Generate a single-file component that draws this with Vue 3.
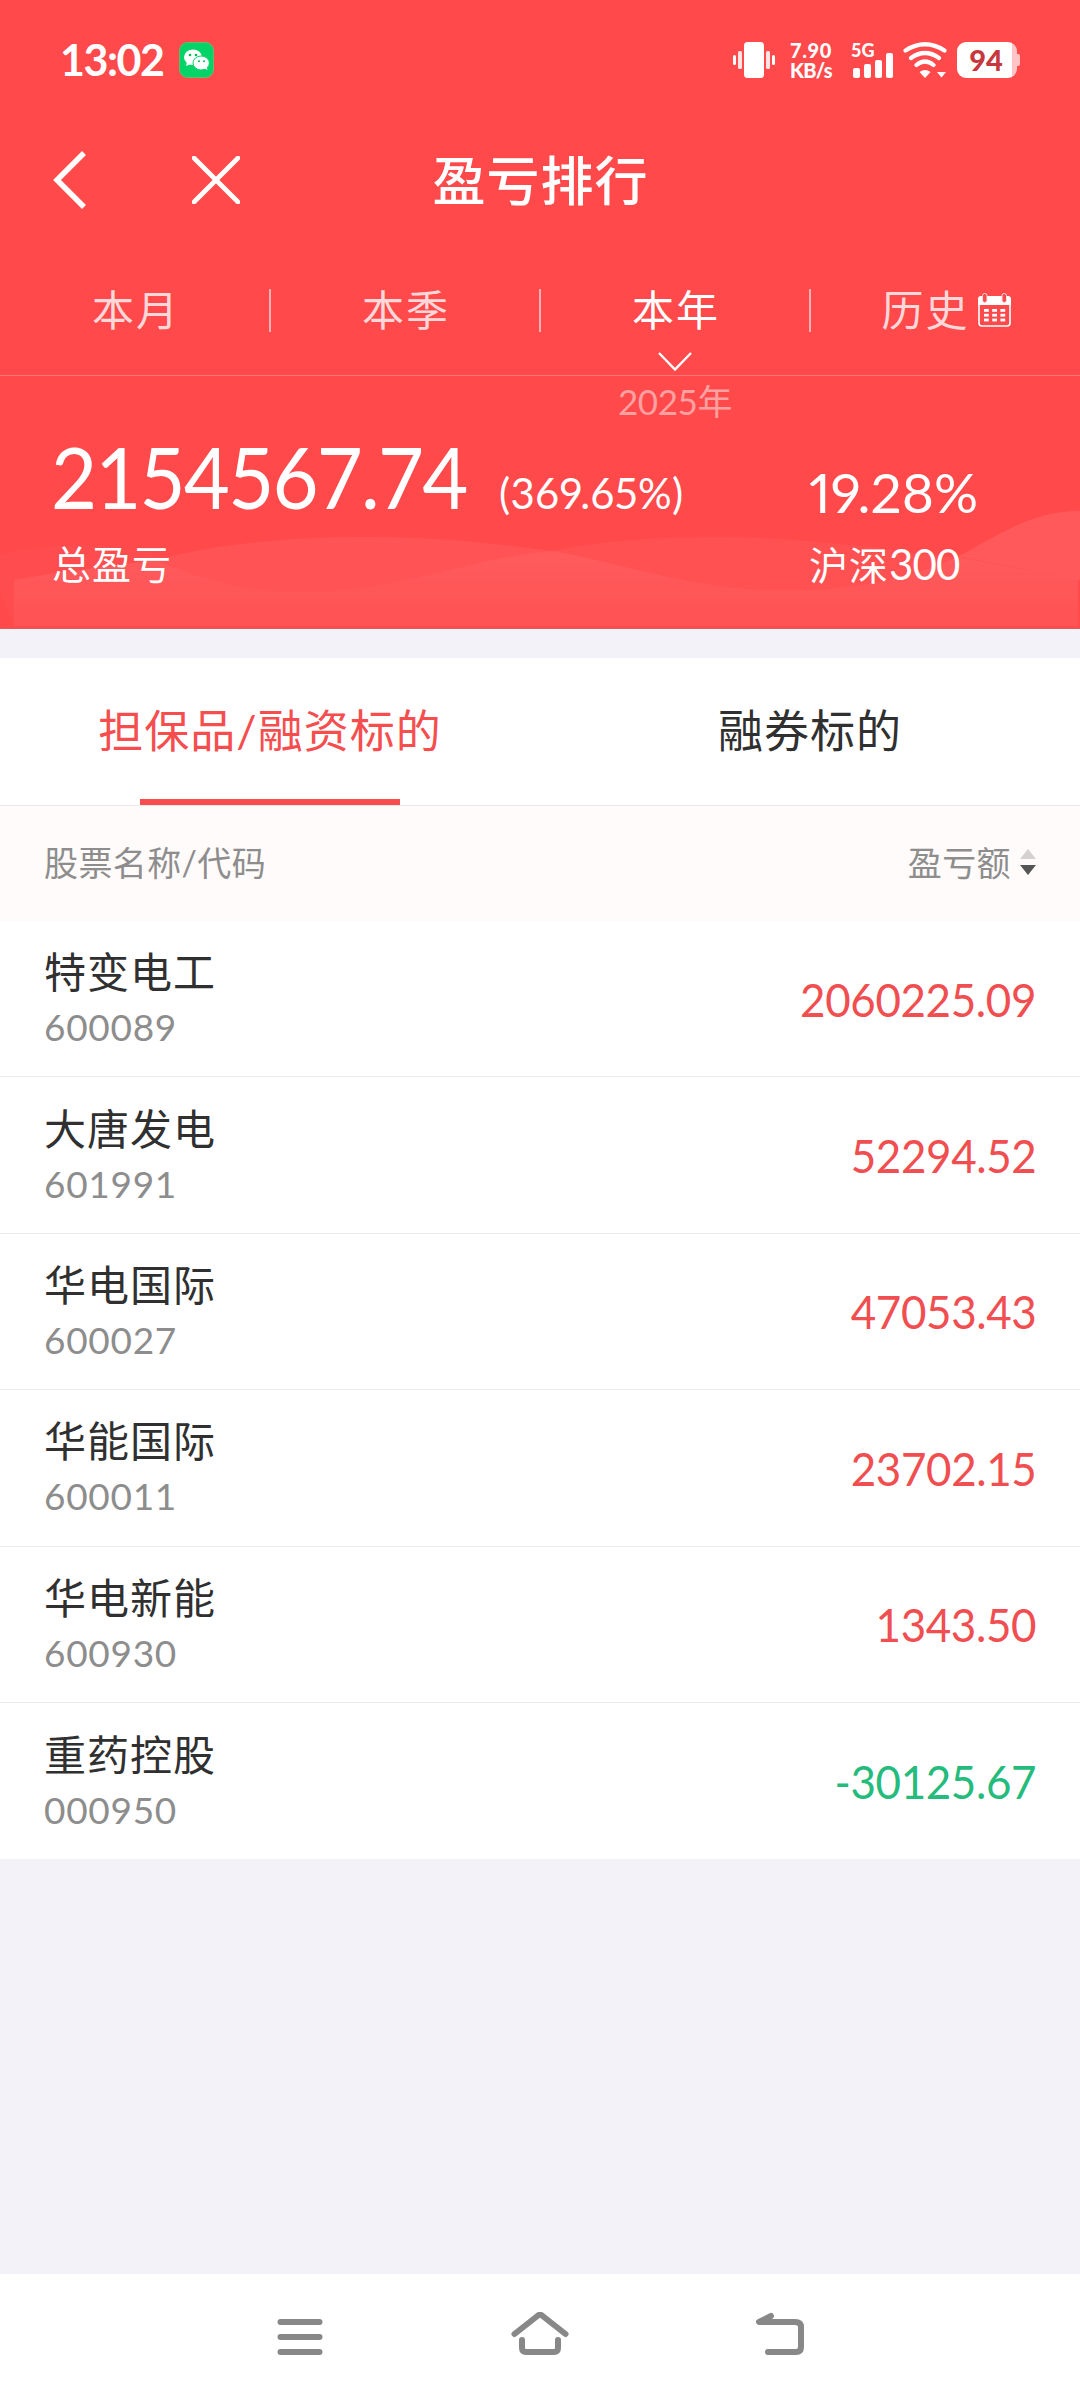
<script setup>
const periods = ['本月', '本季', '本年', '历史']
const stocks = [
  { name: '特变电工', code: '600089', amount: '2060225.09' },
  { name: '大唐发电', code: '601991', amount: '52294.52' },
  { name: '华电国际', code: '600027', amount: '47053.43' },
  { name: '华能国际', code: '600011', amount: '23702.15' },
  { name: '华电新能', code: '600930', amount: '1343.50' },
  { name: '重药控股', code: '000950', amount: '-30125.67' },
]
const calendarDots = [0, 1, 2].flatMap((r) => [0, 1, 2].map((c) => ({ x: 6 + c * 8.2, y: 16 + r * 4.8 })))
</script>

<template>
  <div class="screen">
    <header class="hero">
      <svg class="waves" viewBox="0 0 1080 629" width="1080" height="629" aria-hidden="true">
        <defs>
          <linearGradient id="fade" x1="0" y1="0" x2="0" y2="1">
            <stop offset="0" stop-color="#fff" stop-opacity=".1" />
            <stop offset="1" stop-color="#fff" stop-opacity=".05" />
          </linearGradient>
        </defs>
        <path d="M0 555C50 541 110 542 165 556C110 566 50 574 14 580V625L0 590Z" fill="#fff" fill-opacity=".02" />
        <path d="M155 560C230 541 300 537 370 537C440 537 500 544 552 551C460 560 400 592 300 592C240 592 190 575 155 560Z" fill="#fff" fill-opacity=".06" />
        <path d="M552 551C600 541 650 537 722 537C800 537 880 548 958 558C920 575 860 592 780 590C690 590 620 562 552 551Z" fill="#fff" fill-opacity=".04" />
        <path d="M14 580C60 572 110 566 155 560C190 575 240 592 300 592C400 592 460 560 552 551C620 562 690 590 780 590C860 592 920 575 958 557L1078 580V626H14Z" fill="url(#fade)" />
        <path d="M958 556.500C1000 535 1030 511 1080 511V580.400Z" fill="#fff" fill-opacity=".09" />
      </svg>

      <div class="status">
        <span class="time">13:02</span>
        <svg class="wechat" viewBox="0 0 35 36" width="35" height="36">
          <rect x=".5" y=".5" width="34" height="35" rx="8" fill="#04d368" stroke="#6bb96b" />
          <ellipse cx="14" cy="15.2" rx="9" ry="7.7" fill="#fff" />
          <path d="M8 20l-1 4 5-2z" fill="#fff" />
          <ellipse cx="22.2" cy="21" rx="8.2" ry="7" fill="#fff" stroke="#04d368" />
          <path d="M25 26l3.500 2-1-4z" fill="#fff" />
          <g fill="#04b95a"><circle cx="11" cy="13" r="1.300" /><circle cx="17" cy="13" r="1.300" /><circle cx="20" cy="19.300" r="1" /><circle cx="25" cy="19.300" r="1" /></g>
        </svg>
        <div class="indicators">
          <svg class="vibrate" viewBox="0 0 42 36" width="42" height="36" fill="#fff">
            <rect x="11" width="20" height="36" rx="3.500" />
            <rect x="5" y="9" width="4" height="18" rx="1.500" opacity=".85" /><rect x="33" y="9" width="4" height="18" rx="1.500" opacity=".85" />
            <rect y="13" width="3" height="10" rx="1.500" /><rect x="39" y="13" width="3" height="10" rx="1.500" />
          </svg>
          <div class="speed"><span class="rate">7.90</span><span class="unit">KB/s</span></div>
          <div class="signal">
            <span>5G</span>
            <svg viewBox="0 0 42 36" width="42" height="36" fill="#fff">
              <rect x="2" y="26" width="7" height="10" rx="2" /><rect x="13" y="22" width="7" height="14" rx="2" />
              <rect x="24" y="18" width="7" height="18" rx="2" /><rect x="35" y="11" width="7" height="25" rx="2" />
            </svg>
          </div>
          <svg class="wifi" viewBox="0 0 45 36" width="45" height="36" fill="none" stroke="#fff" stroke-width="4.200" stroke-linecap="round">
            <path d="M2.500 8.500Q22 -4 41.500 8.500M8 16Q22 6 36 16M13.500 23Q22 16 30.500 23" />
            <path d="M16.500 30Q22 26 27.500 30L22 36Z" fill="#fff" stroke="none" />
            <path d="M34 30H43L38.500 35.500Z" fill="#fff" stroke="none" />
          </svg>
          <div class="battery"><span>94</span></div>
        </div>
      </div>

      <nav class="titlebar">
        <svg class="back" viewBox="0 0 34 58" width="34" height="58" fill="none" stroke="#fff" stroke-width="5.500"><path d="M31 2L4 29L31 56" /></svg>
        <svg class="close" viewBox="0 0 48 48" width="48" height="48" fill="none" stroke="#fff" stroke-width="4.600" stroke-linecap="round"><path d="M2 2L46 46M46 2L2 46" /></svg>
        <h1>盈亏排行</h1>
      </nav>

      <div class="periods">
        <div v-for="(p, i) in periods" :key="p" class="period" :class="{ active: i === 2 }">
          <span>{{ p }}</span>
          <svg v-if="i === 3" class="calendar" viewBox="0 0 33 34" width="33" height="34">
            <rect x="1" y="4" width="31" height="29" rx="3" fill="none" stroke="#fff" stroke-width="1.600" />
            <path d="M0 12V6Q0 3 3 3H30Q33 3 33 6V12Z" fill="#fff" />
            <g fill="#fa4a4b" stroke="#fdd" stroke-width="1"><rect x="4.500" y=".5" width="4.500" height="9" rx="2.200" /><rect x="24" y=".5" width="4.500" height="9" rx="2.200" /></g>
            <rect v-for="d in calendarDots" :key="d.x + '-' + d.y" :x="d.x" :y="d.y" width="4.800" height="2.800" fill="#fff" />
          </svg>
          <svg v-if="i === 2" class="caret" viewBox="0 0 34 20" width="34" height="20" fill="none" stroke="#fff" stroke-width="2.400"><path d="M1 1L17 17.500L33 1" /></svg>
        </div>
      </div>

      <div class="year"><span>2025年</span></div>

      <div class="summary">
        <div class="total">
          <div class="figures"><strong>2154567.74</strong><em>(369.65%)</em></div>
          <p>总盈亏</p>
        </div>
        <div class="index">
          <div class="figures benchmark"><b>19.28%</b></div>
          <p>沪深<i>300</i></p>
        </div>
      </div>
    </header>

    <main>
      <div class="tabs">
        <div class="tab selected">担保品/融资标的</div>
        <div class="tab">融券标的</div>
      </div>
      <div class="head">
        <span>股票名称/代码</span>
        <span class="sort">盈亏额
          <svg viewBox="0 0 18 28" width="18" height="28"><path d="M9 1L17 11H1Z" fill="#d3d1d1" /><path d="M1 17H17L9 27Z" fill="#555" /></svg>
        </span>
      </div>
      <div v-for="s in stocks" :key="s.code" class="row">
        <div class="stock"><span class="name">{{ s.name }}</span><span class="code">{{ s.code }}</span></div>
        <span class="amount" :class="{ loss: s.amount.startsWith('-') }">{{ s.amount }}</span>
      </div>
    </main>

    <footer class="navbar">
      <svg viewBox="0 0 60 48" width="60" height="48"><path d="M10.500 10H49.500M10.500 25H49.500M10.500 40H49.500" /></svg>
      <svg viewBox="0 0 60 48" width="60" height="48"><path d="M4.500 22L28 3.500Q30 2 32 3.500L55.500 22M12 28V36Q12 40 16 40H44Q48 40 48 36V28" /></svg>
      <svg viewBox="0 0 60 48" width="60" height="48"><path d="M21 4L9 10H45Q51 10 51 15V35Q51 40 46 40H18" /></svg>
    </footer>
  </div>
</template>

<style>
body { background: #f3f2f8; }
</style>

<style scoped>
.screen { width: 1080px; height: 2400px; display: flex; flex-direction: column; overflow: hidden; background: #f3f2f8; font-family: Lato, "Noto Sans CJK SC", sans-serif; font-variant-numeric: tabular-nums; color: #303030; }
.hero { position: relative; height: 628px; flex: none; background: #ff494b; color: #fff; border-bottom: 1px solid #e05b60; }
.waves { position: absolute; left: 0; top: 0; }
.status { position: relative; height: 120px; display: flex; align-items: center; padding: 0 63px 0 60px; }
.time { width: 119px; font-size: 43px; font-weight: 700; letter-spacing: -1.500px; line-height: 50px; }
.indicators { margin-left: auto; display: flex; align-items: center; }
.speed { margin-left: 15px; width: 45px; display: flex; flex-direction: column; line-height: 20px; font-weight: 900; white-space: nowrap; }
.rate { font-size: 20px; letter-spacing: .6px; }
.unit { font-size: 20px; letter-spacing: -.7px; }
.signal { position: relative; margin-left: 16px; width: 42px; height: 36px; }
.signal span { position: absolute; left: 0; top: -1px; font-size: 18px; line-height: 18px; font-weight: 900; }
.signal svg { display: block; }
.wifi { margin-left: 10px; }
.battery { margin-left: 9px; width: 60px; height: 36px; border-radius: 9px; background: linear-gradient(90deg, #fff 55px, #ffc4c6 55px); display: flex; align-items: center; justify-content: center; color: #c6383d; font-size: 29px; font-weight: 900; position: relative; }
.battery span { padding: 0 2px 2px 0; }
.battery::after { content: ''; position: absolute; right: -3px; top: 12px; width: 3px; height: 12px; background: #ffc4c6; border-radius: 0 2px 2px 0; }
.titlebar { position: relative; height: 120px; display: flex; align-items: center; padding-left: 53px; }
.close { margin-left: 105px; }
h1 { position: absolute; left: 0; right: 0; margin: 0; padding: 2px 0 0 1px; text-align: center; font-size: 53px; font-weight: 500; letter-spacing: 1px; line-height: 80px; }
.periods { position: relative; height: 136px; box-sizing: border-box; padding-top: 5px; border-bottom: 1px solid #ff7677; display: flex; align-items: center; }
.period { position: relative; flex: 1; height: 43px; border-left: 2px solid #ffb0b2; margin-left: -1px; margin-right: -1px; display: flex; align-items: center; justify-content: center; font-size: 42px; letter-spacing: 2px; line-height: 43px; color: #ffd7d8; }
.period:first-child { border-color: transparent; }
.period.active { color: #fff; }
.calendar { margin-left: 8px; }
.caret { position: absolute; left: 50%; margin-left: -18px; top: 63px; }
.year { position: relative; height: 53px; margin-left: 540px; width: 270px; text-align: center; font-size: 35px; letter-spacing: -.4px; line-height: 50px; color: #ffa0a1; }
.summary { position: relative; display: flex; padding-left: 53px; }
.total { width: 756px; }
.figures { height: 107px; display: flex; align-items: baseline; line-height: 93px; }
.benchmark { line-height: 127px; font-variant-numeric: proportional-nums; }
strong { margin-left: -2px; font-size: 86px; font-weight: 400; width: 448px; letter-spacing: -2px; transform: scaleX(.925); transform-origin: 0 50%; }
em { font-style: normal; font-size: 42px; letter-spacing: .4px; font-variant-numeric: proportional-nums; }
b { font-size: 55px; font-weight: 400; }
p { margin: 0; font-size: 39px; letter-spacing: 1px; line-height: 56px; }
.total p { margin-left: -1px; }
i { font-style: normal; font-size: 42px; letter-spacing: -.9px; }
main { margin-top: 29px; background: #fff; }
.tabs { display: flex; height: 148px; box-sizing: border-box; border-bottom: 1px solid #e9e9e9; }
.tab { position: relative; flex: 1; text-align: center; font-size: 45px; letter-spacing: 1px; line-height: 147px; }
.selected { color: #f64d4f; }
.selected::after { content: ''; position: absolute; left: 140px; bottom: 0; width: 260px; height: 6px; background: #f94c4f; }
.head { height: 115px; box-sizing: border-box; background: #fffbfa; display: flex; align-items: center; justify-content: space-between; padding: 0 43px 4px 44px; font-size: 34px; letter-spacing: .4px; color: #8d8d8d; }
.sort { display: flex; align-items: center; gap: 8px; }
.row { height: 156.400px; box-sizing: border-box; display: flex; align-items: center; justify-content: space-between; padding: 1px 44px 0; border-bottom: 1px solid #ebebeb; }
.row:last-child { border-bottom: 0; }
.stock { display: flex; flex-direction: column; }
.name { font-size: 42px; letter-spacing: 1px; line-height: 56px; }
.code { font-size: 37px; line-height: 54px; color: #8d8d8d; letter-spacing: .7px; }
.amount { font-size: 46px; letter-spacing: -.4px; color: #f04e50; transform: scaleX(.955); transform-origin: 100% 50%; }
.loss { color: #25bb7c; }
.navbar { margin-top: auto; height: 126px; box-sizing: border-box; padding-bottom: 2px; background: #fff; display: flex; justify-content: center; gap: 180px; align-items: center; }
.navbar svg { fill: none; stroke: #888; stroke-width: 6; stroke-linecap: round; stroke-linejoin: round; }
</style>
